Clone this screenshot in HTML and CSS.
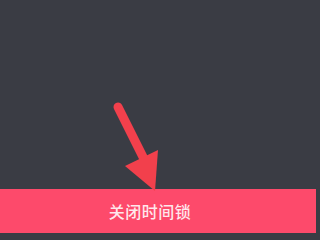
FILE: index.html
```html
<!DOCTYPE html>
<html lang="zh">
<head>
<meta charset="utf-8">
<link rel="stylesheet" href="styles.css">
</head>
<body>
<div class="screen">
  <button class="close-btn">关闭时间锁</button>
  <svg class="arrow" width="320" height="240" viewBox="0 0 320 240">
    <line x1="118" y1="107" x2="146" y2="163" stroke="#f2404c" stroke-width="9" stroke-linecap="round"/>
    <polygon points="155,191 125,166 158,150" fill="#f2404c"/>
  </svg>
</div>
</body>
</html>
```
FILE: styles.css
```css
html, body {
  margin: 0;
  padding: 0;
  background: #3a3c44;
}
.screen {
  position: relative;
  width: 320px;
  height: 240px;
  display: flex;
  flex-direction: column;
  justify-content: flex-end;
  padding-bottom: 7px;
  box-sizing: border-box;
  background: #3a3c44;
  overflow: hidden;
}
.close-btn {
  width: 316px;
  height: 44px;
  border: none;
  margin: 0;
  padding: 0 16px 0 0;
  background: #fd4a6b;
  color: rgba(255, 255, 255, 0.88);
  font-family: "Noto Sans CJK SC", "Noto Sans", sans-serif;
  font-size: 16px;
  font-weight: 500;
  letter-spacing: 0.5px;
  text-align: center;
}
.arrow {
  position: absolute;
  left: 0;
  top: 0;
}
```
